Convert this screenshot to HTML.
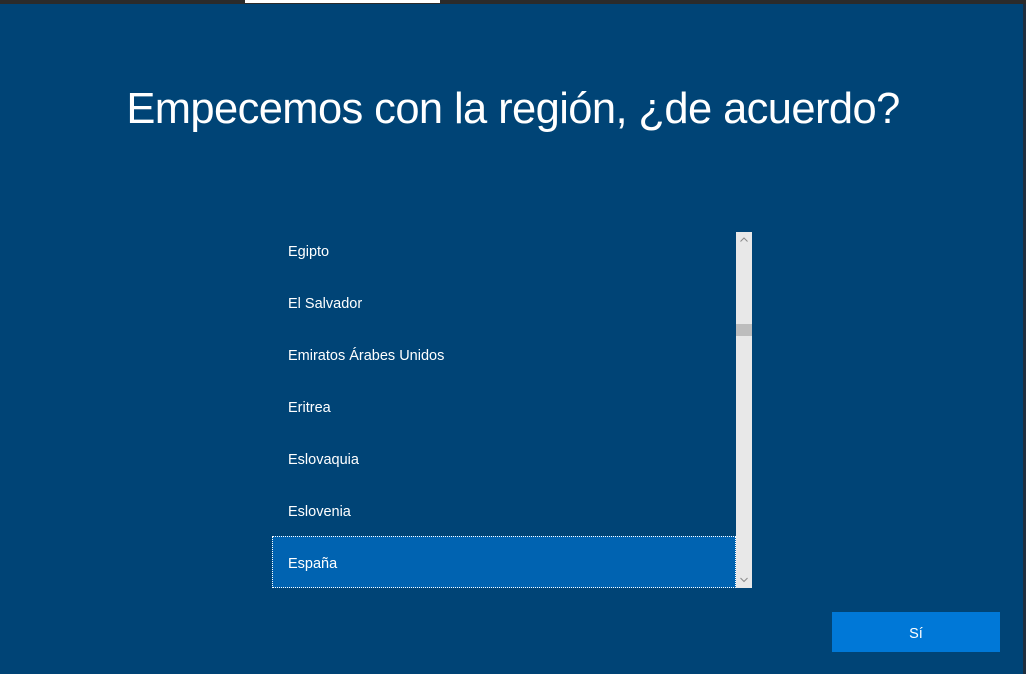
<!DOCTYPE html>
<html><head><meta charset="utf-8"><style>
html,body{margin:0;padding:0;}
body{width:1026px;height:674px;background:#004476;position:relative;overflow:hidden;font-family:"Segoe UI","Liberation Sans",sans-serif;color:#fff;}
.topbar{position:absolute;left:0;top:0;width:1026px;height:4px;background:#2b2b2b;}
.topseg{position:absolute;left:245px;top:0;width:195px;height:3px;background:#fff;}
.redge{position:absolute;left:1023px;top:4px;width:3px;height:670px;background:#1e2e3e;}
h1{position:absolute;left:0;top:81px;width:1026px;margin:0;text-align:center;font-weight:300;font-size:43.5px;line-height:56px;letter-spacing:-0.6px;}
.list{position:absolute;left:272px;top:232px;width:464px;height:356px;overflow:hidden;}
.inner{position:absolute;left:0;top:-8px;width:464px;}
.row{height:52px;line-height:56px;padding-left:16px;font-size:14.5px;box-sizing:border-box;}
.sel{background:#0063b1;outline:1px dotted #fff;outline-offset:-1px;}
.sb{position:absolute;left:736px;top:232px;width:16px;height:356px;background:#e8e8e8;}
.thumb{position:absolute;left:0;top:92px;width:16px;height:12px;background:#bdbdbd;}
.btn{position:absolute;left:832px;top:612px;width:168px;height:40px;background:#0078d7;text-align:center;line-height:44px;font-size:14.5px;}
</style></head><body>
<div class="topbar"></div><div class="topseg"></div><div class="redge"></div>
<h1>Empecemos con la región, ¿de acuerdo?</h1>
<div class="list"><div class="inner">
<div class="row">Egipto</div>
<div class="row">El Salvador</div>
<div class="row">Emiratos Árabes Unidos</div>
<div class="row">Eritrea</div>
<div class="row">Eslovaquia</div>
<div class="row">Eslovenia</div>
<div class="row sel">España</div>
</div></div>
<div class="sb">
<svg width="16" height="16" style="position:absolute;top:0;left:0"><path d="M4.5 9.5 L8 6 L11.5 9.5" stroke="#8a8a8a" fill="none" stroke-width="1"/></svg>
<div class="thumb"></div>
<svg width="16" height="16" style="position:absolute;bottom:0;left:0"><path d="M4.5 6 L8 9.5 L11.5 6" stroke="#8a8a8a" fill="none" stroke-width="1"/></svg>
</div>
<div class="btn">Sí</div>
</body></html>
